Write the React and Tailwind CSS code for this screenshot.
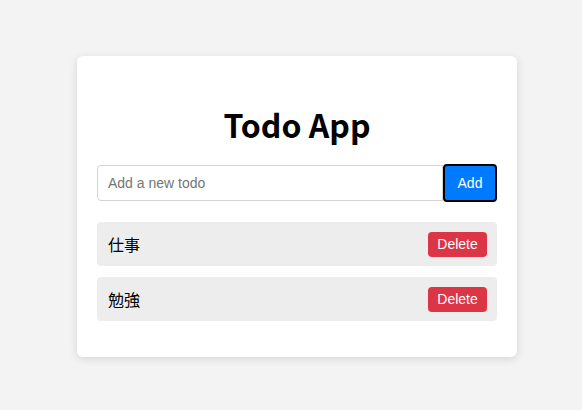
import React, { useState } from 'react'

const initialTodos = [
  { id: 1, text: '仕事' },
  { id: 2, text: '勉強' },
]

export default function App() {
  const [todos, setTodos] = useState(initialTodos)
  const [value, setValue] = useState('')

  const addTodo = () => {
    if (!value.trim()) return
    setTodos([...todos, { id: Date.now(), text: value }])
    setValue('')
  }

  return (
    <div className="min-h-screen bg-[#f3f3f3] pt-[56px] pl-[12px] font-['Noto_Sans_CJK_JP',sans-serif]">
      <div className="mx-auto w-[440px] rounded-md bg-white px-5 pt-[45px] pb-[36px] shadow-[0_2px_8px_rgba(0,0,0,0.12)]">
        <h1 className="text-center text-[32px] font-bold leading-[46px] text-black">Todo App</h1>

        <div className="mt-[17px] flex items-center">
          <input
            value={value}
            onChange={(e) => setValue(e.target.value)}
            placeholder="Add a new todo"
            className="h-[36px] flex-1 rounded-l border border-[#d4d4d4] px-[10px] font-['Liberation_Sans',Arial,sans-serif] text-[14px] text-black placeholder:text-[#757575] outline-none"
          />
          <button
            onClick={addTodo}
            className="h-[38px] w-[54px] rounded border-2 border-black bg-[#007bff] font-['Liberation_Sans',Arial,sans-serif] text-[14px] text-white"
          >
            Add
          </button>
        </div>

        <ul className="mt-5 flex flex-col gap-[11px]">
          {todos.map((todo) => (
            <li
              key={todo.id}
              className="flex h-[44px] items-center justify-between rounded bg-[#ededed] pl-[11px] pr-[10px] text-[16px] text-black"
            >
              <span>{todo.text}</span>
              <button
                onClick={() => setTodos(todos.filter((t) => t.id !== todo.id))}
                className="h-[25px] w-[59px] rounded bg-[#dc3545] font-['Liberation_Sans',Arial,sans-serif] text-[14px] text-white"
              >
                Delete
              </button>
            </li>
          ))}
        </ul>
      </div>
    </div>
  )
}
